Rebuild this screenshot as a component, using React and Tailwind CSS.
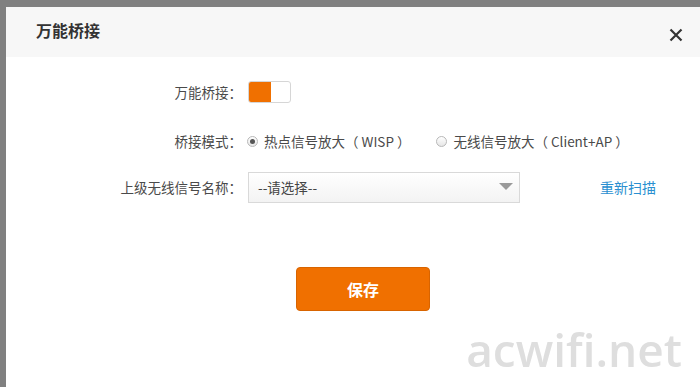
import { useState } from "react";

function Toggle({ on }) {
  return (
    <div className="flex h-[22px] w-[43px] overflow-hidden rounded-[3px] border border-[#d6d6d6] bg-white">
      <div className={on ? "w-[22px] bg-[#f07000]" : "w-[22px] bg-white"} />
    </div>
  );
}

function Radio({ checked, label }) {
  return (
    <label className="flex items-center gap-[6px]">
      <span className="flex h-[11px] w-[11px] items-center justify-center rounded-full border border-[#b8b8b8] bg-gradient-to-b from-white to-[#e6e6e6]">
        {checked && <span className="h-[5px] w-[5px] rounded-full bg-[#555]" />}
      </span>
      <span>{label}</span>
    </label>
  );
}

export default function App() {
  const [bridgeOn] = useState(true);

  return (
    <div
      className="h-[387px] w-[700px] overflow-hidden bg-[#808080] pl-[6px] pt-[7px] text-[13.5px] text-[#4a4a4a]"
      style={{ fontFamily: '"Microsoft YaHei", "Noto Sans CJK SC", "Liberation Sans", sans-serif' }}
    >
      <div className="relative h-full bg-white">
        <div className="flex h-[50px] items-center justify-between bg-[#f7f7f7] pl-[30px] pr-[17px]">
          <h1 className="-mt-[4px] text-[16px] font-bold text-[#333]">万能桥接</h1>
          <svg width="14" height="14" viewBox="0 0 14 14" className="mt-[6px]">
            <path d="M1.5 1.5 L12.5 12.5 M12.5 1.5 L1.5 12.5" stroke="#333" strokeWidth="2.2" />
          </svg>
        </div>

        <div className="flex flex-col pt-[24px]">
          <div className="flex h-[22px] items-center">
            <div className="w-[236px] text-right">万能桥接：</div>
            <div className="ml-[6px]">
              <Toggle on={bridgeOn} />
            </div>
          </div>

          <div className="mt-[27px] flex h-[22px] items-center">
            <div className="w-[236px] text-right">桥接模式：</div>
            <div className="ml-[5px] flex items-center gap-[26px]">
              <Radio checked label="热点信号放大（ WISP ）" />
              <Radio label="无线信号放大（ Client+AP ）" />
            </div>
          </div>

          <div className="mt-[20px] flex h-[30px] items-center">
            <div className="w-[236px] text-right">上级无线信号名称：</div>
            <div className="ml-[6px] flex h-[31px] w-[272px] items-center justify-between border border-[#d9d9d9] bg-gradient-to-b from-white to-[#f3f3f3] pl-[9px] pr-[6px]">
              <span className="text-[#444]">--请选择--</span>
              <svg width="14" height="8" viewBox="0 0 14 8">
                <path d="M0 0 L14 0 L7 7 Z" fill="#9a9a9a" />
              </svg>
            </div>
            <a className="ml-[80px] text-[14px] text-[#2a8fd0]">重新扫描</a>
          </div>

          <div className="mt-[65px] flex">
            <button className="ml-[290px] flex h-[44px] w-[134px] items-center justify-center rounded-[4px] border border-[#d86400] bg-[#f07000] text-[16px] font-bold text-white">
              保存
            </button>
          </div>
        </div>

        <div
          className="absolute bottom-[15px] right-[18px] text-[46px] font-semibold leading-none text-[#dedede] blur-[0.7px]"
          style={{ fontFamily: '"Open Sans", "Liberation Sans", sans-serif' }}
        >
          acwifi.net
        </div>
      </div>
    </div>
  );
}
